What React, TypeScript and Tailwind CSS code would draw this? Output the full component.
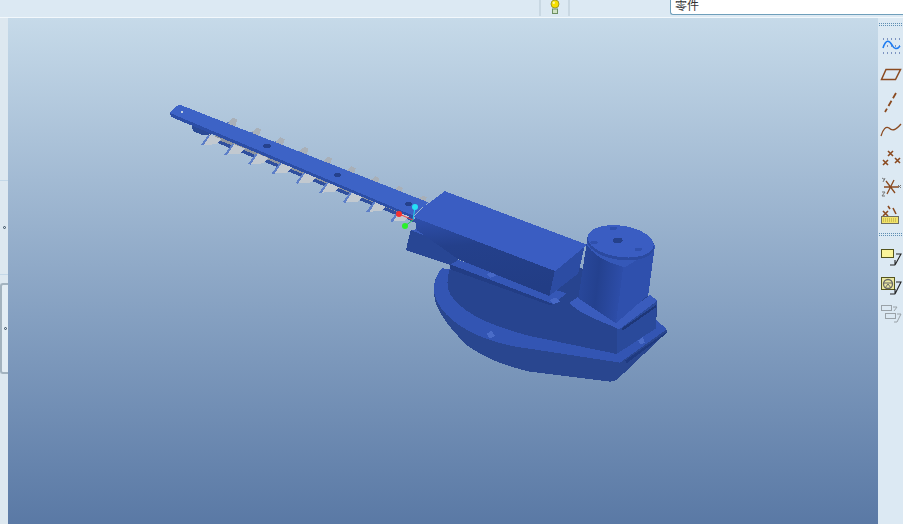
const teeth = [0, 1, 2, 3, 4, 5, 6, 7, 8];

function Blade() {
  return (
    <g transform="translate(160 95) scale(0.3333)">
      {/* upper tips */}
      {teeth.map((i) => (
        <g key={i} transform={`translate(${i * 71} ${i * 29.2})`}>
          <path d="M200 86 L220 68 L232 74 L226 94 Z" fill="#a9b0b8" />
          <path d="M190 90 L204 80 L208 83 L194 93 Z" fill="#5878c0" />
          <path d="M268 118 L278 110 L281 113 L271 120 Z" fill="#5878c0" />
        </g>
      ))}
      {/* end block + dark strip */}
      <path d="M36 60 L96 88 L98 108 L128 120 L160 118 L110 80 Z" fill="#2a4a96" />
      <path d="M165 120 L725 350 L720 360 L160 130 Z" fill="#8f969f" />
      {teeth.map((i) => (
        <g key={i} transform={`translate(${i * 71} ${i * 28.6})`}>
          <path d="M174 134 L232 158 L226 166 L168 142 Z" fill="#2f4f9e" />
          <path d="M128 150 L148 118 L184 132 L168 148 Z" fill="#c2c9d0" />
          <path d="M122 150 L146 118 L151 120 L130 152 Z" fill="#5d7fc8" />
        </g>
      ))}
      {/* bar top */}
      <path d="M34 66 L760 370 L764 360 L30 54 Z" fill="#2c4ea6" />
      <path d="M30 54 L50 32 L62 30 L805 322 L760 362 Z" fill="#3d63c6" />
      <ellipse cx="66" cy="50" rx="4" ry="3" fill="#c3d3e2" />
      <ellipse cx="321" cy="153" rx="11" ry="6" fill="#25418c" />
      <ellipse cx="533" cy="240" rx="11" ry="6" fill="#25418c" />
      <ellipse cx="745" cy="327" rx="11" ry="6" fill="#25418c" />
    </g>
  );
}

function Housing() {
  return (
    <g transform="translate(390 180) scale(0.3333)">
      <defs>
        <linearGradient id="front" x1="0" y1="0" x2="0.15" y2="1">
          <stop offset="0" stopColor="#2f50ad" />
          <stop offset="0.4" stopColor="#24408b" />
          <stop offset="1" stopColor="#223d85" />
        </linearGradient>
        <linearGradient id="cyl" x1="0" y1="0" x2="1" y2="0.2">
          <stop offset="0" stopColor="#2a4a9f" />
          <stop offset="0.5" stopColor="#24418f" />
          <stop offset="1" stopColor="#2d4da8" />
        </linearGradient>
      </defs>
      {/* base plate */}
      <path
        d="M155 265 C135 290 126 320 133 350 C140 390 165 430 230 495 C270 525 330 555 420 575 L660 605 L680 600 L833 455 L800 420 L500 300 Z"
        fill="#29468f"
      />
      <path
        d="M155 265 C135 290 128 320 134 345 C150 400 210 450 300 480 C350 497 390 503 430 508 L690 548 L830 448 L800 420 L500 300 Z"
        fill="#3355b3"
      />
      <path d="M710 550 L828 462 L832 454 L705 542 Z" fill="#1f3a80" />
      <path d="M290 462 L305 452 L315 468 L300 476 Z" fill="#4a6cc8" />
      <path d="M745 482 L758 472 L765 488 L752 494 Z" fill="#4a6cc8" />
      {/* middle body */}
      <path
        d="M178 270 C170 300 170 325 182 345 C215 395 290 435 420 468 L680 522 L798 445 L802 362 L540 250 Z"
        fill="#27448f"
      />
      <path d="M680 450 L800 365 L798 445 L680 522 Z" fill="#2a4a9b" />
      <path d="M695 445 L798 375 L798 382 L698 452 Z" fill="#1e3778" />
      {/* motor seat lip */}
      <path d="M538 368 C570 405 640 425 688 448 L802 362 L780 345 L680 420 L565 350 Z" fill="#3a5cbd" />
      {/* gearbox step */}
      <path d="M178 252 L205 240 L530 340 L490 372 Z" fill="#3557b6" />
      <path d="M178 252 L490 372 L480 376 L180 268 Z" fill="#223d85" />
      <path d="M290 282 L305 275 L318 288 L300 294 Z" fill="#4668c6" />
      <path d="M480 360 L498 352 L510 365 L490 372 Z" fill="#4668c6" />
      {/* left block */}
      <path d="M62 150 L48 210 L180 255 L205 240 L212 210 Z" fill="#284694" />
      <path d="M62 150 L80 148 L212 205 L212 212 Z" fill="#3a5cbb" />
      {/* box */}
      <path d="M75 110 L495 270 L478 348 L205 238 L80 150 Z" fill="url(#front)" />
      <path d="M495 270 L585 195 L565 280 L478 348 Z" fill="#2c4ca3" />
      <path
        d="M165 37 L585 195 L495 270 L75 110 L100 85 Z"
        fill="#3a5dc2"
        stroke="#3a5dc2"
        strokeWidth="6"
        strokeLinejoin="round"
      />
      {/* motor */}
      <path d="M590 190 L700 258 L678 430 L565 355 Z" fill="url(#cyl)" />
      <path d="M700 258 L795 195 L775 345 L678 430 Z" fill="#2f50ad" />
      <path d="M590 180 L590 195 C620 235 660 250 705 262 L795 205 L795 195 L690 225 Z" fill="#3558b8" />
      <ellipse cx="692" cy="190" rx="102" ry="50" transform="rotate(8 692 190)" fill="#2b4aa0" />
      <ellipse cx="692" cy="184" rx="100" ry="47" transform="rotate(8 692 184)" fill="#3a5dc2" />
      <ellipse cx="683" cy="181" rx="15" ry="8" fill="#25418c" />
      <ellipse cx="670" cy="145" rx="11" ry="5" fill="#2f50ad" />
      <ellipse cx="612" cy="188" rx="11" ry="5" fill="#2f50ad" />
      <ellipse cx="745" cy="208" rx="11" ry="5" fill="#2f50ad" />
    </g>
  );
}

function Model() {
  return (
    <svg viewBox="8 18 870 506" className="h-full w-full" shapeRendering="crispEdges">
      <Blade />
      <Housing />
      {/* triad */}
      <g shapeRendering="auto">
        <path d="M413 220 L415 207" stroke="#22d3ee" strokeWidth="1" />
        <path d="M413 220 L399 214" stroke="#ef4444" strokeWidth="1" />
        <path d="M413 220 L405 226" stroke="#22c55e" strokeWidth="1" />
        <circle cx="415" cy="207" r="3" fill="#26e0f5" />
        <circle cx="399" cy="214" r="3" fill="#f5322f" />
        <circle cx="405" cy="226" r="3" fill="#2bf02b" />
      </g>
    </svg>
  );
}

function DottedRule() {
  return <div className="h-[3px] w-[23px] border-y border-dotted border-[#5f8fb3]" />;
}

function ToolIcon({ h, children }: { h: number; children: React.ReactNode }) {
  return (
    <svg width="22" height={h} viewBox={`0 0 22 ${h}`} fill="none" className="shrink-0">
      {children}
    </svg>
  );
}

function Toolbar() {
  const brown = "#8a4a20";
  return (
    <div className="flex w-[25px] shrink-0 flex-col items-center bg-[#dce9f3] pt-[5px]">
      <DottedRule />
      <div className="mt-[11px]">
        <ToolIcon h={18}>
          <path d="M3 2H20M3 16H20M3 9H20" stroke="#1f3f8f" strokeDasharray="1 3" />
          <path d="M3 11 C6 2 9 3 12 8 C14 12 17 13 20 9" stroke="#1d7cf2" strokeWidth="1.6" />
        </ToolIcon>
      </div>
      <div className="mt-[13px]">
        <ToolIcon h={13}>
          <path d="M6 1.5H20.5L15.5 11.5H1.5Z" stroke={brown} strokeWidth="1.5" />
        </ToolIcon>
      </div>
      <div className="mt-[11px]">
        <ToolIcon h={21}>
          <path d="M16 1L5 20" stroke={brown} strokeWidth="1.8" strokeDasharray="6 3" />
        </ToolIcon>
      </div>
      <div className="mt-[9px]">
        <ToolIcon h={15}>
          <path d="M1 14 C3 7 6 4 9 6 C12 9 15 9 21 2" stroke={brown} strokeWidth="1.3" />
        </ToolIcon>
      </div>
      <div className="mt-[12px]">
        <ToolIcon h={18}>
          <path d="M8 2L13 7M13 2L8 7M3 11L8 16M8 11L3 16M15 9L20 14M20 9L15 14" stroke={brown} strokeWidth="1.6" />
        </ToolIcon>
      </div>
      <div className="mt-[10px]">
        <ToolIcon h={20}>
          <path d="M4 10H19M7 17L14 3M6 4L15 16" stroke={brown} strokeWidth="1.3" />
          <path d="M2 1L5 3M5 1L3 5M18 8L21 11M21 8L18 11M2 15H5L2 19H5" stroke="#777" />
        </ToolIcon>
      </div>
      <div className="mt-[8px]">
        <ToolIcon h={19}>
          <path d="M8 1L10 4M13 3L16 9M3 6L8 11M8 6L3 11" stroke={brown} strokeWidth="1.6" />
          <rect x="1.5" y="11.5" width="17" height="7" fill="#f2e36a" stroke="#6f6f60" />
          <path d="M3 14H17M3 16H17" stroke="#a99d3c" strokeDasharray="1 1" />
        </ToolIcon>
      </div>
      <div className="mt-[9px]">
        <DottedRule />
      </div>
      <div className="mt-[12px]">
        <ToolIcon h={19}>
          <rect x="1.5" y="1.5" width="12" height="8" fill="#fbf59a" stroke="#54541c" />
          <path d="M16 6H21L15 17M15 17V12M15 17H10" stroke="#222" strokeWidth="1.1" />
        </ToolIcon>
      </div>
      <div className="mt-[9px]">
        <ToolIcon h={19}>
          <rect x="1.5" y="1.5" width="13" height="12" fill="#e9e7a0" stroke="#54541c" />
          <circle cx="8" cy="8" r="4.5" stroke="#666" strokeWidth="1.3" />
          <path d="M4 7H12M8 8L5 12M8 8L11 12" stroke="#666" />
          <path d="M16 6H21L15 18M15 18V13M15 18H10" stroke="#222" strokeWidth="1.1" />
        </ToolIcon>
      </div>
      <div className="mt-[9px]">
        <ToolIcon h={19}>
          <rect x="1.5" y="1.5" width="10" height="5" stroke="#9aa2a8" />
          <rect x="5.5" y="9.5" width="10" height="5" stroke="#9aa2a8" />
          <path d="M13 3H17L14 7M17 10H21L17 18H14" stroke="#9aa2a8" />
        </ToolIcon>
      </div>
    </div>
  );
}

function LeftStrip() {
  return (
    <div className="flex w-2 shrink-0 flex-col items-center bg-[#dde8f0]">
      <div className="mt-[162px] h-px w-full bg-[#c4d8e8]" />
      <div className="mt-[45px] h-[3px] w-[3px] rounded-full border border-[#33475a]" />
      <div className="mt-[45px] h-px w-full bg-[#c4d8e8]" />
      <div className="mt-[8px] flex h-[91px] w-full flex-col items-center justify-center rounded-l-[3px] border-y-2 border-l-2 border-[#a3b3bf] bg-[#e3edf4]">
        <div className="h-[3px] w-[3px] rounded-full border border-[#33475a]" />
      </div>
    </div>
  );
}

export default function App() {
  return (
    <div className="flex h-[524px] w-[903px] flex-col overflow-hidden bg-[#dce9f3] font-['Liberation_Sans','Noto_Sans_CJK_SC',sans-serif]">
      <div className="flex h-[18px] shrink-0 items-start border-b border-[#f2f8fc] bg-[#dce9f3]">
        <div className="ml-[539px] flex h-4 w-[31px] justify-center border-x-2 border-[#c9d8e3]">
          <svg width="10" height="14" viewBox="0 0 10 14">
            <circle cx="5" cy="4" r="4" fill="#f6e000" stroke="#8f8a20" strokeWidth="0.8" />
            <circle cx="3.8" cy="2.8" r="1.2" fill="#fff6a0" />
            <rect x="2.5" y="9" width="5" height="4.5" fill="#cfe3c4" stroke="#6d8f62" />
          </svg>
        </div>
        <div className="ml-[100px] flex h-[15px] flex-1 items-center rounded-bl-[3px] border-b border-l border-[#6f9fbb] bg-white pl-1 text-[12px] leading-none text-[#333]">
          <span className="-mt-[3px]">零件</span>
        </div>
      </div>
      <div className="flex min-h-0 flex-1">
        <LeftStrip />
        <div className="min-w-0 flex-1 bg-gradient-to-b from-[#c6dae9] to-[#5a79a5]">
          <Model />
        </div>
        <Toolbar />
      </div>
    </div>
  );
}
